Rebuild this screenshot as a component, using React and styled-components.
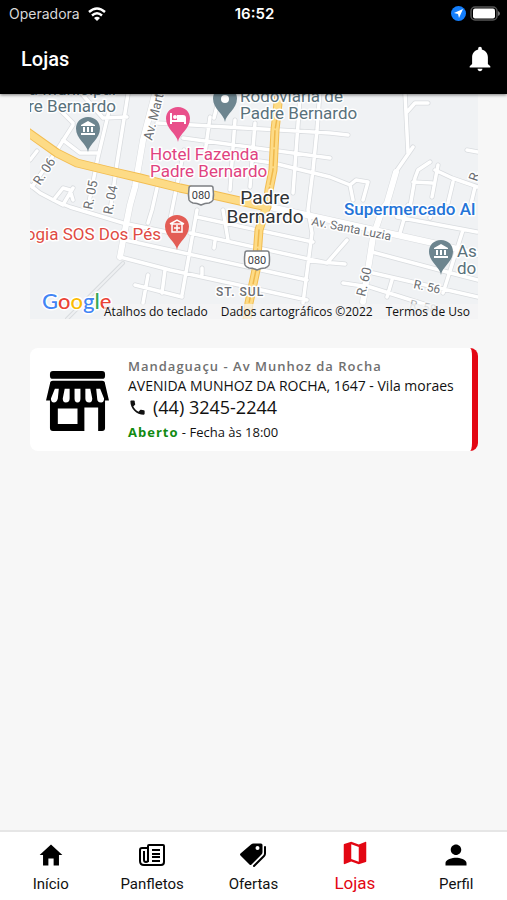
import styled, { createGlobalStyle } from 'styled-components';
import {
  IoMdCall,
  IoMdHome,
  IoMdMap,
  IoMdNotifications,
  IoMdPerson,
} from 'react-icons/io';

const GlobalStyle = createGlobalStyle`
  *, *::before, *::after {
    box-sizing: border-box;
  }

  body {
    margin: 0;
    background-color: #f7f7f7;
    color: #111;
    font-family: Roboto, sans-serif;
  }

  h1, h2, p {
    margin: 0;
    font-weight: 400;
  }
`;

const Page = styled.div`
  display: flex;
  flex-direction: column;
  min-height: 100vh;
`;

const Header = styled.header`
  position: relative;
  z-index: 2;
  background-color: #000;
  color: #fff;
  box-shadow: 0 1px 3px rgba(0, 0, 0, 0.5);
`;

const StatusBar = styled.div`
  display: grid;
  grid-template-columns: 1fr auto 1fr;
  align-items: center;
  height: 27px;
  padding: 0 7px 0 9px;
  font-family: Inter, sans-serif;
  font-size: 14px;
`;

const StatusGroup = styled.div`
  display: flex;
  align-items: center;
  justify-content: ${({ $end }) => ($end ? 'flex-end' : 'flex-start')};
  gap: ${({ $end }) => ($end ? '4px' : '8px')};
  color: #d8d8d8;
`;

const Clock = styled.time`
  font-size: 15px;
  font-weight: 600;
`;

const TitleBar = styled.div`
  display: flex;
  align-items: center;
  justify-content: space-between;
  height: 67px;
  padding: 0 12px 4px 21px;
`;

const Title = styled.h1`
  font-size: 20px;
  font-weight: 500;
`;

const IconButton = styled.button`
  display: flex;
  padding: 0;
  border: none;
  background: none;
  color: #fff;
  font-size: 30px;
  cursor: pointer;
`;

const Content = styled.main`
  display: flex;
  flex: 1;
  flex-direction: column;
  gap: 29px;
  padding: 0 29px 24px 30px;
`;

const MapWrapper = styled.section`
  position: relative;
  height: 225px;
  overflow: hidden;
  background-color: #f0f2f4;
`;

const MapDrawing = styled.svg`
  display: block;
  width: 100%;
  height: 100%;
  font-family: Roboto, sans-serif;
`;

const MapCredits = styled.div`
  position: absolute;
  right: 0;
  bottom: 0;
  display: flex;
  gap: 13px;
  padding: 0 8px 0 0;
  background-color: rgba(245, 245, 245, 0.7);
  color: #111;
  font-family: 'Open Sans', sans-serif;
  font-size: 12px;
  line-height: 15px;
  white-space: nowrap;
`;

const CreditButton = styled.button`
  padding: 0;
  border: none;
  background: none;
  color: inherit;
  font: inherit;
  cursor: pointer;
`;

const CreditLink = styled.a`
  color: inherit;
  text-decoration: none;
`;

const StoreCard = styled.article`
  display: flex;
  align-items: center;
  gap: 19px;
  min-height: 103px;
  padding: 8px 12px 6px 16px;
  border-right: 6px solid #e30613;
  border-radius: 8px;
  background-color: #fff;
  font-family: 'Open Sans', sans-serif;
`;

const StoreDrawing = styled.svg`
  flex: none;
  width: 63px;
  height: 60px;
`;

const StoreInfo = styled.div`
  display: flex;
  flex-direction: column;
`;

const StoreName = styled.h2`
  color: #707070;
  font-size: 13px;
  font-weight: 600;
  letter-spacing: 1px;
  line-height: 19px;
`;

const Address = styled.p`
  font-size: 14px;
  line-height: 19px;
`;

const Phone = styled.a`
  display: flex;
  align-items: center;
  gap: 6px;
  color: #111;
  font-size: 18px;
  line-height: 25px;
  text-decoration: none;

  svg {
    width: 19px;
    height: 19px;
  }
`;

const Hours = styled.p`
  font-size: 13px;
  line-height: 25px;
`;

const Open = styled.strong`
  color: #118a11;
  letter-spacing: 1px;
`;

const TabBar = styled.nav`
  position: sticky;
  bottom: 0;
  display: grid;
  grid-template-columns: repeat(5, 1fr);
  height: 70px;
  border-top: 2px solid #e6e6e6;
  background-color: #fff;
`;

const Tab = styled.a`
  display: flex;
  flex-direction: column;
  align-items: center;
  gap: 5px;
  padding-top: ${({ $active }) => ($active ? '6px' : '9px')};
  color: ${({ $active }) => ($active ? '#e30613' : '#111')};
  font-size: ${({ $active }) => ($active ? '17px' : '15px')};
  line-height: 20px;
  text-decoration: none;

  svg {
    width: ${({ $active }) => ($active ? '30px' : '28px')};
    height: ${({ $active }) => ($active ? '30px' : '28px')};
    color: ${({ $active }) => ($active ? '#e30613' : '#000')};
  }
`;

// Minor streets share one stroke; avenues are wider.
const streets = [
  'M53 103L73 123M110 107L98 157L88 207M128 94L117 163L110 212',
  'M82 94L103 118L127 117M73 125L57 150L32 187',
  'M63 140L80 153L98 153M30 160L37 151M30 185L40 193L63 205',
  'M53 200L70 207L123 223L167 232L180 235M55 198L63 188L70 190L73 200M73 188L64 203',
  'M157 123L193 125L330 133L348 135M157 188L152 210L148 223',
  'M210 117L205 153M235 120L230 190M255 123L250 187M300 97L293 193',
  'M320 90L317 130L313 170L308 210L312 233L303 303',
  'M183 138L330 158M205 153L273 163L330 177L350 185',
  'M197 217L313 242M190 233L327 263M345 264L310 261M125 240L170 250L307 280M120 257L170 270L307 300',
  'M197 210L182 295M223 210L228 240M214 248L215 241M202 268L202 275',
  'M165 270L162 293M148 275L143 303M135 285L182 297',
  'M405 93L408 153M407 112L415 103L428 103M413 147L395 173',
  'M410 207L415 178L418 170L430 162M413 182L432 183M438 165L432 197M435 170L452 178L478 187',
  'M453 182L448 203M475 187L471 204M467 150L478 152',
  'M350 185L356 180L368 182L363 200M350 185L353 200',
  'M397 217L477 232M408 205L400 233M463 230L443 293M372 252L447 272L478 280',
  'M373 273L478 297M343 283L370 287L433 307M392 280L387 297M430 218L433 207',
  'M220 94L214 118M347 240L327 263M184 150L170 220',
];

const avenues = [
  'M155 94L143 140L135 187L130 205L125 230L120 257',
  'M396 172L387 203L382 210L373 237L363 302',
  'M270 207L325 219L433 243L478 254',
];

const highway = [
  'M26 131L57 153L77 163L110 171L140 178L180 188L213 195L267 207',
  'M279 94L275 130L273 170L269 190L267 205L259 230L256 270L249 303L247 320',
];

const Pin = ({ x, y, color, kind }) => (
  <g transform={`translate(${x} ${y})`}>
    <path
      d="M0 35C-1 27-12 22-12 11.500C-12 5-7 0 0 0S12 5 12 11.500C12 22 1 27 0 35Z"
      fill={color}
    />
    {kind === 'bank' && (
      <path
        d="M-7 8L0 4L7 8V9H-7ZM-5 10H-3V15H-5ZM-1 10H1V15H-1ZM3 10H5V15H3ZM-7 16H7V18H-7Z"
        fill="#fff"
      />
    )}
    {kind === 'bed' && (
      <path
        d="M-8 6H-6V13H-1V8H5Q8 8 8 11V17H6V15H-6V17H-8Z M-5 10A2 2 0 1 1-1 10A2 2 0 1 1-5 10Z"
        fill="#fff"
      />
    )}
    {kind === 'clinic' && (
      <g fill="none" stroke="#fff" strokeWidth="1.500">
        <path d="M-7 9L0 5L7 9M-5 9V17H5V9ZM0 10V16M-3 13H3" />
      </g>
    )}
    {kind === 'dot' && <circle cy="12" r="4" fill="#fff" />}
  </g>
);

const RoadShield = ({ x, y }) => (
  <g transform={`translate(${x} ${y})`}>
    <path
      d="M-10-9H10Q12-9 12-7Q13 0 12 5Q11 7 8 8Q4 8 0 10Q-4 8-8 8Q-11 7-12 5Q-13 0-12-7Q-12-9-10-9Z"
      fill="#fff"
      stroke="#7c7f83"
      strokeWidth="1.500"
      strokeLinejoin="round"
    />
    <text y="4" textAnchor="middle" fontSize="11" fill="#3c4043">
      080
    </text>
  </g>
);

const CityMap = () => (
  <MapDrawing
    viewBox="30 94 448 225"
    preserveAspectRatio="xMidYMid slice"
    role="img"
    aria-label="Mapa de Padre Bernardo"
  >
    <g fill="none" strokeLinecap="round" strokeLinejoin="round">
      <path d="M123 263L67 319" stroke="#d9dcdf" strokeWidth="4" />
      <path d="M123 263L67 319" stroke="#eef0f2" strokeWidth="2" />
      <path d={streets.join('')} stroke="#d9dcdf" strokeWidth="5" />
      <path d={avenues.join('')} stroke="#d9dcdf" strokeWidth="7" />
      <path d={streets.join('')} stroke="#fff" strokeWidth="3.500" />
      <path d={avenues.join('')} stroke="#fff" strokeWidth="6" />
      <path d={highway.join('')} stroke="#f2bd52" strokeWidth="9" />
      <path d={highway.join('')} stroke="#fddb86" strokeWidth="7" />
      <path
        d="M278 112L275 130L273 170L269 190M259 230L256 270L249 303"
        stroke="#f0b94c"
        strokeWidth="1.500"
        strokeDasharray="16 3"
      />
    </g>

    <Pin x={88} y={117} color="#6d858f" kind="bank" />
    <Pin x={178} y={107} color="#e9508b" kind="bed" />
    <Pin x={225} y={87} color="#6d858f" kind="dot" />
    <Pin x={177} y={215} color="#e35d55" kind="clinic" />
    <Pin x={441} y={240} color="#6d858f" kind="bank" />
    <RoadShield x={201} y={195} />
    <RoadShield x={257} y={260} />

    <g
      stroke="#fff"
      strokeWidth="3"
      strokeLinejoin="round"
      paintOrder="stroke"
      fontSize="17"
    >
      <g fill="#59717b">
        <text x="116" y="95" textAnchor="end">a Municipal</text>
        <text x="116" y="112" textAnchor="end">re Bernardo</text>
        <text x="240" y="102">Rodoviária de</text>
        <text x="240" y="119">Padre Bernardo</text>
        <text x="457" y="257">As</text>
        <text x="457" y="274">do</text>
      </g>
      <g fill="#e0437f">
        <text x="150" y="160">Hotel Fazenda</text>
        <text x="150" y="177">Padre Bernardo</text>
      </g>
      <text x="161" y="240" textAnchor="end" fill="#df4b43">
        ogia SOS Dos Pés
      </text>
      <text x="344" y="215" fontWeight="500" fontSize="17" fill="#2474d8">
        Supermercado Al
      </text>
      <g fill="#303336" fontSize="19" textAnchor="middle">
        <text x="265" y="204">Padre</text>
        <text x="265" y="223">Bernardo</text>
      </g>
      <g fill="#6b6e72" fontSize="13">
        <text transform="translate(40 186) rotate(-57)">R. 06</text>
        <text transform="translate(92 210) rotate(-79)">R. 05</text>
        <text transform="translate(112 215) rotate(-79)">R. 04</text>
        <text transform="translate(152 141) rotate(-76)">Av. Marti</text>
        <text transform="translate(311 225) rotate(11)" fontSize="12">
          Av. Santa Luzia
        </text>
        <text transform="translate(365 297) rotate(-77)">R. 60</text>
        <text transform="translate(413 288) rotate(12)" fontSize="12">R. 56</text>
        <text transform="translate(409 308) rotate(12)" fontSize="12" opacity="0.5">
          R. 58
        </text>
        <text transform="translate(477 182) rotate(-72)">R.</text>
        <text x="216" y="296" fontSize="12" letterSpacing="1" fontWeight="500">
          ST. SUL
        </text>
      </g>
      <text
        x="42"
        y="309"
        fontFamily="Lato, sans-serif"
        fontSize="22"
        fontWeight="500"
      >
        <tspan fill="#4285f4">G</tspan>
        <tspan fill="#ea4335">o</tspan>
        <tspan fill="#fbbc05">o</tspan>
        <tspan fill="#4285f4">g</tspan>
        <tspan fill="#34a853">l</tspan>
        <tspan fill="#ea4335">e</tspan>
      </text>
    </g>
  </MapDrawing>
);

const WifiIcon = () => (
  <svg width="18" height="14" viewBox="0 0 18 14" aria-hidden="true">
    <g fill="none" stroke="#fff" strokeWidth="2.400">
      <path d="M1 5Q9-2 17 5" />
      <path d="M4 8.500Q9 4 14 8.500" />
    </g>
    <path d="M6 11Q9 8.500 12 11L9 14Z" fill="#fff" />
  </svg>
);

const LocationIcon = () => (
  <svg width="15" height="15" viewBox="0 0 15 15" aria-hidden="true">
    <circle cx="7.500" cy="7.500" r="7.500" fill="#147efb" />
    <path d="M12 3L8 12L7 8L3 7Z" fill="#fff" />
  </svg>
);

const BatteryIcon = () => (
  <svg width="30" height="15" viewBox="0 0 30 15" aria-hidden="true">
    <rect x="1" y="1" width="26" height="13" rx="4" fill="none" stroke="#555" strokeWidth="1.500" />
    <rect x="3" y="2.500" width="22" height="10" rx="2" fill="#fff" />
    <path d="M28 5Q30 6 30 7.500Q30 9 28 10Z" fill="#777" />
  </svg>
);

const NewspaperIcon = () => (
  <svg viewBox="0 0 28 28" fill="none" stroke="currentColor" aria-hidden="true">
    <path
      d="M11 4H25Q26 4 26 5V21Q26 24 23 24H6Q2 24 2 20V9Q2 7 4 7H10M10 21V5Q10 4 11 4M6 10V19Q6 21 8 21Q10 21 10 19"
      strokeWidth="2"
      strokeLinejoin="round"
    />
    <path d="M14 9H22M14 13H22M14 16H22M14 20H22" strokeWidth="2" />
  </svg>
);

const TagsIcon = () => (
  <svg viewBox="0 0 28 28" aria-hidden="true">
    <path
      d="M12 3.500Q13 2.500 14.500 2.500H22Q23.500 2.500 23.500 4V11Q23.500 12.500 22.500 13.500L12.500 23.500Q11.500 24.500 10.500 23.500L1.500 14.500Q.500 13.500 1.500 12.500ZM18.500 5A2 2 0 1 0 18.500 9A2 2 0 1 0 18.500 5Z"
      fill="currentColor"
      fillRule="evenodd"
    />
    <path
      d="M26 6V12.500Q26 14 25 15L15 25"
      fill="none"
      stroke="currentColor"
      strokeWidth="2"
      strokeLinecap="round"
    />
  </svg>
);

const StoreIcon = () => (
  <StoreDrawing viewBox="0 0 64 61" aria-hidden="true">
    <rect x="4" y="0" width="56" height="8" rx="3" />
    <path d="M7 10H57Q60 10 60 13L64 30H60V58Q60 61 57 61H53V37H39V61H7Q4 61 4 58V30H0L4 13Q4 10 7 10ZM12 38V54H32V38Z" fillRule="evenodd" />
    <path
      d="M9 18H13L12 28Q11 32 8 32Q5 32 5 28ZM19 18H24V28Q24 32 20 32Q17 32 17 28ZM29 18H35V28Q35 32 32 32Q29 32 29 28ZM40 18H45L47 28Q47 32 44 32Q40 32 40 28ZM51 18H55L59 28Q59 32 56 32Q52 32 52 28Z"
      fill="#fff"
    />
  </StoreDrawing>
);

const tabs = [
  { label: 'Início', icon: IoMdHome },
  { label: 'Panfletos', icon: NewspaperIcon },
  { label: 'Ofertas', icon: TagsIcon },
  { label: 'Lojas', icon: IoMdMap, active: true },
  { label: 'Perfil', icon: IoMdPerson },
];

function App() {
  return (
    <Page>
      <GlobalStyle />
      <Header>
        <StatusBar>
          <StatusGroup>
            Operadora
            <WifiIcon />
          </StatusGroup>
          <Clock>16:52</Clock>
          <StatusGroup $end>
            <LocationIcon />
            <BatteryIcon />
          </StatusGroup>
        </StatusBar>
        <TitleBar>
          <Title>Lojas</Title>
          <IconButton type="button" aria-label="Notificações">
            <IoMdNotifications />
          </IconButton>
        </TitleBar>
      </Header>

      <Content>
        <MapWrapper>
          <CityMap />
          <MapCredits>
            <CreditButton type="button">Atalhos do teclado</CreditButton>
            <span>Dados cartográficos ©2022</span>
            <CreditLink href="#termos">Termos de Uso</CreditLink>
          </MapCredits>
        </MapWrapper>

        <StoreCard>
          <StoreIcon />
          <StoreInfo>
            <StoreName>Mandaguaçu - Av Munhoz da Rocha</StoreName>
            <Address>AVENIDA MUNHOZ DA ROCHA, 1647 - Vila moraes</Address>
            <Phone href="tel:+554432452244">
              <IoMdCall />
              (44) 3245-2244
            </Phone>
            <Hours>
              <Open>Aberto</Open> - Fecha às 18:00
            </Hours>
          </StoreInfo>
        </StoreCard>
      </Content>

      <TabBar>
        {tabs.map(({ label, icon: Icon, active }) => (
          <Tab
            key={label}
            href={`#${label.toLowerCase()}`}
            $active={active}
            aria-current={active ? 'page' : undefined}
          >
            <Icon />
            {label}
          </Tab>
        ))}
      </TabBar>
    </Page>
  );
}

export default App;
